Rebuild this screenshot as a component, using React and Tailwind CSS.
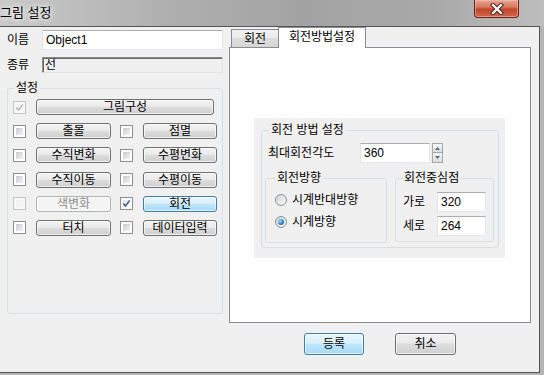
import React from 'react'
import clsx from 'clsx'

const FONT = "font-['Liberation_Sans','Noto_Sans_CJK_KR',sans-serif]"

function Button({ children, tone = 'normal', className }) {
  const tones = {
    normal: 'border-[#707070] bg-[linear-gradient(#f2f2f2,#ebebeb_45%,#dddddd_50%,#cfcfcf)] text-black',
    blue: 'border-[#3c7fb1] bg-[linear-gradient(#eaf6fd,#d9f0fc_45%,#bee6fd_50%,#a7d9f5)] text-black',
    disabled: 'border-[#adb2b5] bg-[#f4f4f4] text-[#8d8d8d]',
  }
  return (
    <button
      type="button"
      className={clsx(
        'flex shrink-0 items-center justify-center rounded-[3px] border text-[12px] leading-none shadow-[inset_0_0_0_1px_rgba(255,255,255,0.65)]',
        tones[tone],
        className
      )}
    >
      {children}
    </button>
  )
}

function Check({ checked, disabled }) {
  return (
    <span
      className={clsx(
        'flex h-[13px] w-[13px] shrink-0 border p-[2px]',
        disabled ? 'border-[#c4c4c4] bg-[#f7f7f7]' : 'border-[#8e8f8f] bg-white'
      )}
    >
      <span
        className={clsx(
          'flex h-full w-full items-center justify-center',
          disabled
            ? 'bg-[#f4f4f4]'
            : checked
              ? 'bg-[linear-gradient(135deg,#dfe3e8,#fbfbfb)]'
              : 'bg-[linear-gradient(135deg,#c6cad0,#f2f2f2)]'
        )}
      >
        {checked && (
          <svg width="9" height="9" viewBox="0 0 9 9" className="-m-[1px]">
            <path
              d="M1.2 4.6 L3.4 7 L7.8 1.4"
              fill="none"
              stroke={disabled ? '#b8b8b8' : '#3d5a98'}
              strokeWidth="1.5"
            />
          </svg>
        )}
      </span>
    </span>
  )
}

function Radio({ checked }) {
  return (
    <span className="flex h-[12px] w-[12px] shrink-0 items-center justify-center rounded-full border border-[#8e8f8f] bg-[linear-gradient(135deg,#d0d3d8,#fafafa)]">
      {checked && (
        <span className="h-[6px] w-[6px] rounded-full bg-[radial-gradient(circle_at_35%_35%,#a8e4ff,#2a82cc_55%,#0f4f8e)]" />
      )}
    </span>
  )
}

function TextBox({ children, className }) {
  return (
    <div
      className={clsx(
        'flex shrink-0 items-center border border-[#e3e9ef] border-t-[#abadb3] border-l-[#e2e3ea] bg-white pl-[3px] text-[12px] text-black',
        className
      )}
    >
      {children}
    </div>
  )
}

const rows = [
  [{ label: '출몰' }, { label: '점멸' }],
  [{ label: '수직변화' }, { label: '수평변화' }],
  [{ label: '수직이동' }, { label: '수평이동' }],
  [{ label: '색변화', disabled: true }, { label: '회전', checked: true, tone: 'blue' }],
  [{ label: '터치' }, { label: '데이터입력' }],
]

export default function App() {
  return (
    <div className={clsx('flex h-[375px] w-[544px] flex-col overflow-hidden bg-[#b4b4b4] text-[12px] text-black', FONT)}>
      {/* title bar */}
      <div className="flex h-[26px] shrink-0 items-start justify-between bg-[linear-gradient(90deg,#c9c9c9,#b0b0b0_30%,#a3a3a3_55%,#a9a9a9_80%,#bdbdbd)]">
        <span className="mt-[6px] text-[13px] leading-[14px] [text-shadow:0_0_5px_#ffffff,0_0_8px_#ffffff]">그림 설정</span>
        <div className="mr-[25px] flex h-[18px] w-[45px] items-center justify-center rounded-b-[4px] border border-t-0 border-[#6b2418] bg-[linear-gradient(#e6a593,#d77c64_40%,#c2442a_55%,#cf6a4e)] shadow-[inset_0_0_0_1px_rgba(255,200,180,0.5)]">
          <svg width="14" height="12" viewBox="0 0 14 12">
            <path d="M3 2 L11 10 M11 2 L3 10" stroke="#3d2a26" strokeWidth="4.2" strokeLinecap="square" />
            <path d="M3 2 L11 10 M11 2 L3 10" stroke="#ffffff" strokeWidth="2.2" strokeLinecap="square" />
          </svg>
        </div>
      </div>

      {/* client area */}
      <div className="flex h-[347px] w-[540px] shrink-0 border-t border-r border-b border-[#555555] bg-[#f0f0f0]">
        {/* left column */}
        <div className="flex w-[229px] shrink-0 flex-col pl-[7px] pt-[3px]">
          <div className="flex h-[20px] items-center">
            <span className="w-[35px]">이름</span>
            <TextBox className="h-[20px] w-[181px]">Object1</TextBox>
          </div>
          <div className="mt-[7px] flex h-[16px] items-center">
            <span className="w-[35px]">종류</span>
            <div className="flex h-[16px] w-[181px] items-center border border-[#e3e3e3] border-t-[#8a8a8a] border-l-[#8a8a8a] bg-[#f0f0f0] pl-[2px] shadow-[inset_1px_1px_0_#696969]">
              선
            </div>
          </div>
          <fieldset className="mt-[8px] h-[233px] w-[216px] rounded-[3px] border border-[#d5dfe5] px-[5px] pt-[4px]">
            <legend className="ml-[1px] px-[2px] leading-[14px]">설정</legend>
            <div className="flex flex-col gap-[8.2px]">
              <div className="flex h-[16px] items-center">
                <Check checked disabled />
                <Button className="ml-[10px] h-[16px] w-[178px]">그림구성</Button>
              </div>
              {rows.map((pair, i) => (
                <div key={i} className="flex h-[16px] items-center">
                  <Check checked={pair[0].checked} disabled={pair[0].disabled} />
                  <Button
                    className="ml-[10px] h-[16px] w-[75px]"
                    tone={pair[0].disabled ? 'disabled' : pair[0].tone}
                  >
                    {pair[0].label}
                  </Button>
                  <span className="ml-[9px]">
                    <Check checked={pair[1].checked} />
                  </span>
                  <Button className="ml-[10px] h-[16px] w-[74px]" tone={pair[1].tone}>
                    {pair[1].label}
                  </Button>
                </div>
              ))}
            </div>
          </fieldset>
        </div>

        {/* right column */}
        <div className="flex flex-col">
          <div className="relative z-10 -mb-px flex h-[21px] items-end">
            <div className="mb-px ml-[2px] flex h-[18px] w-[48px] items-center justify-center border border-b-0 border-[#898c95] bg-[linear-gradient(#f2f2f2,#ebebeb_45%,#dddddd_50%,#d6d6d6)] pt-[1px]">
              회전
            </div>
            <div className="-ml-px flex h-[21px] w-[88px] items-start justify-center border border-b-0 border-[#898c95] bg-white pt-[2px] leading-[14px]">
              회전방법설정
            </div>
          </div>
          <div className="h-[276px] w-[302px] border border-[#898c95] bg-white pl-[24px] pt-[70px]">
            <div className="flex h-[140px] w-[251px] flex-col bg-[#f0f0f0] pl-[7px] pt-[5px]">
              <fieldset className="h-[125px] w-[238px] rounded-[3px] border border-[#d5dfe5] px-[3px]">
                <legend className="ml-[4px] px-[2px] leading-[14px]">회전 방법 설정</legend>
                <div className="mt-[6px] flex h-[20px] items-center">
                  <span className="ml-[3px] w-[92px]">최대회전각도</span>
                  <TextBox className="h-[20px] w-[70px]">360</TextBox>
                  <div className="ml-[2px] flex h-[20px] w-[11px] flex-col">
                    <div className="flex h-[10px] items-center justify-center border border-[#a7a7a7] bg-[linear-gradient(#f6f6f6,#dcdcdc)]">
                      <svg width="5" height="3" viewBox="0 0 5 3"><path d="M0 3 L2.5 0 L5 3 Z" fill="#4a6aa0" /></svg>
                    </div>
                    <div className="flex h-[10px] items-center justify-center border border-t-0 border-[#a7a7a7] bg-[linear-gradient(#f6f6f6,#dcdcdc)]">
                      <svg width="5" height="3" viewBox="0 0 5 3"><path d="M0 0 L2.5 3 L5 0 Z" fill="#4a6aa0" /></svg>
                    </div>
                  </div>
                </div>
                <div className="mt-[8px] flex gap-[8px]">
                  <fieldset className="h-[72px] w-[122px] rounded-[3px] border border-[#d5dfe5] px-[9px]">
                    <legend className="px-[2px] leading-[14px]">회전방향</legend>
                    <div className="flex flex-col gap-[8px] pt-[8px]">
                      <div className="flex h-[14px] items-center">
                        <Radio />
                        <span className="ml-[5px]">시계반대방향</span>
                      </div>
                      <div className="flex h-[14px] items-center">
                        <Radio checked />
                        <span className="ml-[5px]">시계방향</span>
                      </div>
                    </div>
                  </fieldset>
                  <fieldset className="h-[71px] w-[98px] rounded-[3px] border border-[#d5dfe5] px-[7px]">
                    <legend className="px-[1px] leading-[14px]">회전중심점</legend>
                    <div className="flex flex-col gap-[4px] pt-[7px]">
                      <div className="flex h-[20px] items-center">
                        <span className="w-[34px]">가로</span>
                        <TextBox className="h-[20px] w-[49px]">320</TextBox>
                      </div>
                      <div className="flex h-[20px] items-center">
                        <span className="w-[34px]">세로</span>
                        <TextBox className="h-[20px] w-[49px]">264</TextBox>
                      </div>
                    </div>
                  </fieldset>
                </div>
              </fieldset>
            </div>
          </div>
          <div className="mt-[10px] flex w-[302px] justify-center gap-[31px]">
            <Button tone="blue" className="h-[22px] w-[60px]">등록</Button>
            <Button className="h-[22px] w-[61px]">취소</Button>
          </div>
        </div>
      </div>
    </div>
  )
}
